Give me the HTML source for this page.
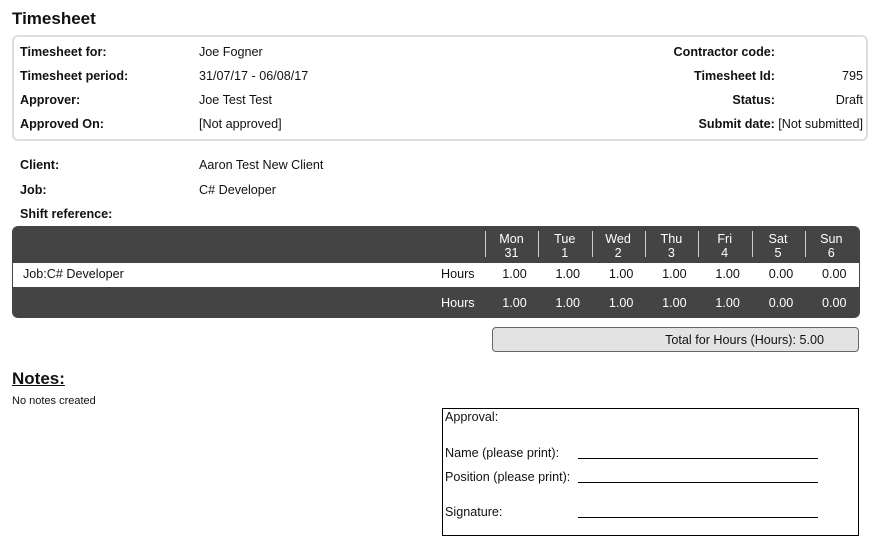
<!DOCTYPE html>
<html><head><style>
body{margin:0;width:885px;height:549px;background:#fff;font-family:"Liberation Sans",Arial,sans-serif;font-size:12.6px;color:#111;position:relative;overflow:hidden}
.a{position:absolute;white-space:nowrap}
.b{font-weight:bold}
.r{text-align:right}
.c{text-align:center}
</style></head><body>
<div class="a b" style="left:12px;top:9px;font-size:17px">Timesheet</div>
<div class="a" style="left:12px;top:35px;width:856px;height:106px;border:2px solid #ddd;border-radius:6px;box-sizing:border-box"></div>
<div class="a b" style="left:20px;top:45px">Timesheet for:</div>
<div class="a b" style="left:20px;top:69px">Timesheet period:</div>
<div class="a b" style="left:20px;top:93px">Approver:</div>
<div class="a b" style="left:20px;top:117px">Approved On:</div>
<div class="a" style="left:199px;top:45px">Joe Fogner</div>
<div class="a" style="left:199px;top:69px">31/07/17 - 06/08/17</div>
<div class="a" style="left:199px;top:93px">Joe Test Test</div>
<div class="a" style="left:199px;top:117px">[Not approved]</div>
<div class="a b" style="right:110px;top:45px">Contractor code:</div>
<div class="a b" style="right:110px;top:69px">Timesheet Id:</div>
<div class="a b" style="right:110px;top:93px">Status:</div>
<div class="a" style="right:22px;top:117px"><b>Submit date:</b> [Not submitted]</div>
<div class="a" style="right:22px;top:69px">795</div>
<div class="a" style="right:22px;top:93px">Draft</div>
<div class="a b" style="left:20px;top:158px">Client:</div>
<div class="a b" style="left:20px;top:183px">Job:</div>
<div class="a b" style="left:20px;top:207px">Shift reference:</div>
<div class="a" style="left:199px;top:158px">Aaron Test New Client</div>
<div class="a" style="left:199px;top:183px">C# Developer</div>
<div class="a" style="left:12px;top:226px;width:848px;height:92px;background:#444;border-radius:6px"></div>
<div class="a" style="left:13px;top:263px;width:846px;height:24px;background:#fff"></div>
<div class="a" style="left:23px;top:267px">Job:C# Developer</div>
<div class="a" style="left:441px;top:267px">Hours</div>
<div class="a" style="left:441px;top:296px;color:#fff">Hours</div>
<div id="cols"></div>
<div class="a" style="left:492px;top:327px;width:367px;height:25px;background:#e3e3e3;border:1px solid #666;border-radius:4px;box-sizing:border-box"></div>
<div class="a" style="right:61px;top:333px">Total for Hours (Hours): 5.00</div>
<div class="a b" style="left:12px;top:369px;font-size:17px;text-decoration:underline">Notes:</div>
<div class="a" style="left:12px;top:395px;font-size:11px">No notes created</div>
<div class="a" style="left:442px;top:408px;width:417px;height:128px;border:1px solid #000;box-sizing:border-box"></div>
<div class="a" style="left:445px;top:410px">Approval:</div>
<div class="a" style="left:445px;top:446px">Name (please print):</div>
<div class="a" style="left:445px;top:470px">Position (please print):</div>
<div class="a" style="left:445px;top:505px">Signature:</div>
<div class="a" style="left:578px;top:458px;width:240px;border-top:1px solid #000"></div>
<div class="a" style="left:578px;top:482px;width:240px;border-top:1px solid #000"></div>
<div class="a" style="left:578px;top:517px;width:240px;border-top:1px solid #000"></div>
<script>
var d=[["Mon","31","1.00"],["Tue","1","1.00"],["Wed","2","1.00"],["Thu","3","1.00"],["Fri","4","1.00"],["Sat","5","0.00"],["Sun","6","0.00"]],h="";
for(var i=0;i<7;i++){var x=485+i*53.3;
h+='<div class="a" style="left:'+x+'px;top:231px;height:26px;border-left:1px solid #ccc"></div>';
h+='<div class="a c" style="left:'+x+'px;top:232px;width:53px;color:#fff;line-height:14px">'+d[i][0]+'<br>'+d[i][1]+'</div>';
h+='<div class="a c" style="left:'+(x+3)+'px;top:267px;width:53px">'+d[i][2]+'</div>';
h+='<div class="a c" style="left:'+(x+3)+'px;top:296px;width:53px;color:#fff">'+d[i][2]+'</div>';}
document.getElementById('cols').innerHTML=h;
</script>
</body></html>
